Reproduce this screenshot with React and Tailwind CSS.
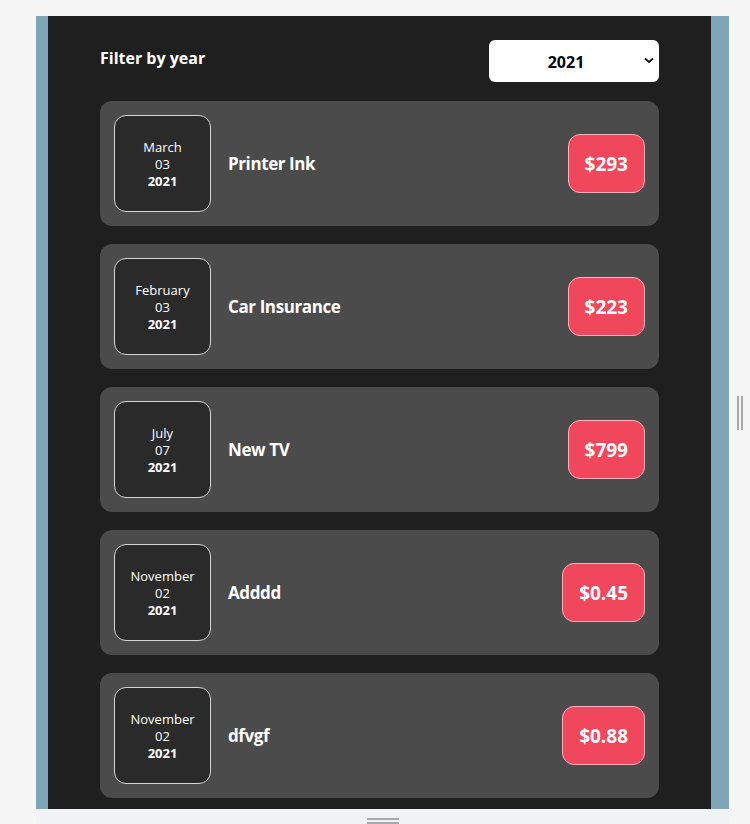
const expenses = [
  { id: 1, month: "March", day: "03", year: "2021", title: "Printer Ink", amount: "$293" },
  { id: 2, month: "February", day: "03", year: "2021", title: "Car Insurance", amount: "$223" },
  { id: 3, month: "July", day: "07", year: "2021", title: "New TV", amount: "$799" },
  { id: 4, month: "November", day: "02", year: "2021", title: "Adddd", amount: "$0.45" },
  { id: 5, month: "November", day: "02", year: "2021", title: "dfvgf", amount: "$0.88" },
];

function ExpenseDate({ month, day, year }) {
  return (
    <div className="w-[97px] h-[97px] shrink-0 flex flex-col items-center justify-center pt-[1px] bg-[#2a2a2a] border border-[#d6d6d6] rounded-[12px] text-white text-[13px] leading-[17px]">
      <div>{month}</div>
      <div>{day}</div>
      <div className="font-bold">{year}</div>
    </div>
  );
}

function ExpenseItem({ item }) {
  return (
    <div className="h-[125px] flex items-center bg-[#4b4b4b] rounded-[12px] px-[14px]">
      <ExpenseDate month={item.month} day={item.day} year={item.year} />
      <h2 className="flex-1 ml-[17px] pt-[1px] text-white text-[17px] font-bold tracking-[-0.4px]">{item.title}</h2>
      <div className="h-[59px] flex items-center px-[16px] pt-[1px] bg-[#f0475d] border border-[#f7b4bd] rounded-[12px] text-white text-[19px] font-bold">
        {item.amount}
      </div>
    </div>
  );
}

export default function App() {
  return (
    <div className="w-[750px] h-[824px] bg-[#f5f5f5] flex flex-col overflow-hidden" style={{ fontFamily: '"Open Sans", "Noto Sans", sans-serif' }}>
      <div className="h-[16px] shrink-0" />
      <div className="flex">
        <div className="w-[36px] shrink-0" />
        <div className="w-[12px] shrink-0 bg-[#7fa6b8]" />
        <div className="w-[663px] h-[793px] shrink-0 bg-[#1f1f1f] overflow-hidden px-[52px] pt-[24px]">
          <div className="flex items-center justify-between h-[42px]">
            <label className="text-white text-[16px] font-bold -mt-[7px]">Filter by year</label>
            <div className="relative w-[170px] h-[42px] bg-white rounded-[6px] flex items-center justify-center pr-[16px] pt-[2px]">
              <span className="text-black text-[16px] font-bold">2021</span>
              <svg className="absolute right-[5px] top-[17px]" width="10" height="7" viewBox="0 0 10 7">
                <path d="M1 1.5 L5 5 L9 1.5" fill="none" stroke="#111" strokeWidth="1.8" />
              </svg>
            </div>
          </div>
          <div className="mt-[19px] flex flex-col gap-[18px]">
            {expenses.map((item) => (
              <ExpenseItem key={item.id} item={item} />
            ))}
          </div>
        </div>
        <div className="w-[18px] shrink-0 bg-[#7fa6b8]" />
        <div className="flex-1 flex items-center justify-center gap-[2px]">
          <div className="w-[2px] h-[34px] bg-[#a8a8a8]" />
          <div className="w-[2px] h-[34px] bg-[#a8a8a8]" />
        </div>
      </div>
      <div className="flex-1 flex">
        <div className="w-[36px] shrink-0" />
        <div className="w-[693px] bg-[#f1f2f4] flex flex-col items-center pt-[9px] gap-[2px]">
          <div className="w-[32px] h-[2px] bg-[#a8a8a8]" />
          <div className="w-[32px] h-[2px] bg-[#a8a8a8]" />
        </div>
      </div>
    </div>
  );
}
